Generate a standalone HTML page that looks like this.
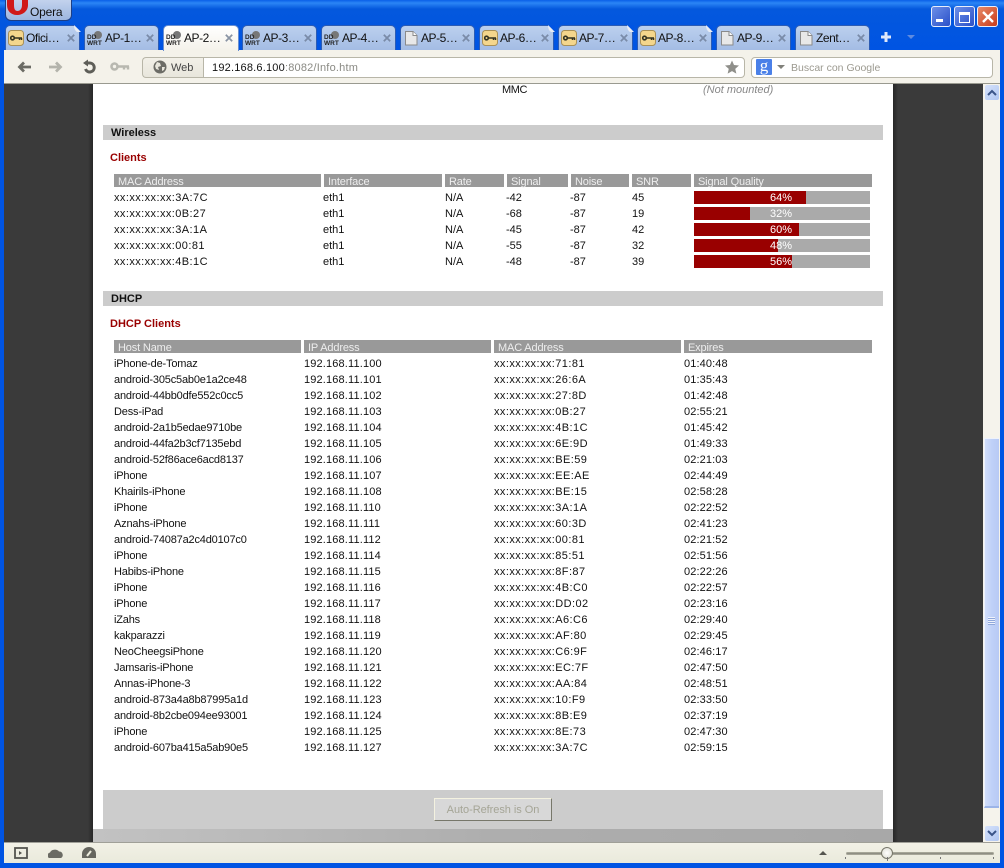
<!DOCTYPE html>
<html><head><meta charset="utf-8"><style>
html,body{margin:0;padding:0}
body{width:1004px;height:868px;position:relative;overflow:hidden;background:#0054e3;font:11px/16px "Liberation Sans",sans-serif;color:#111}
div,span,svg{position:absolute;white-space:nowrap}
.t{position:absolute}
#title{left:0;top:0;width:1004px;height:50px;background:linear-gradient(#0a5fe8 0,#2b85f5 3px,#0458dd 9px,#0054e3 100%)}
.tab{top:25px;width:75px;height:25px;background:linear-gradient(#bcd0ee,#a4bce4);border:1px solid #2c5cb4;border-bottom:0;border-radius:5px 5px 0 0;box-sizing:border-box;font-size:12px;line-height:24px;color:#111}
.tab.a{background:linear-gradient(#fff,#f4f2ea);border-color:#6a8fd0;height:26px;z-index:2;width:76px}
.tab .l{left:20px;top:0;letter-spacing:-.45px}
.tab .x{left:61px;top:8px;width:8px;height:8px}
.tab svg.i{left:2px;top:3px;width:16px;height:17px}
.tab svg.f{left:68px;top:-1px;width:7px;height:7px}
.h{height:13px;background:#999;color:#eee;line-height:14px;letter-spacing:-.15px}
.h span{left:4px;top:1px}
.sec{left:103px;width:780px;height:15px;background:#ccc;font-weight:bold;line-height:15px}
.sec span{left:8px;top:1px}
.red{color:#900;font-weight:bold;left:110px}
.r{left:0;width:1004px;height:16px}
.r span{top:1px}
.r span[style^="left:114px"]{letter-spacing:-.18px}
.r span[style^="left:304px"]{letter-spacing:.15px}
.r span[style^="left:684px"]{letter-spacing:.12px}
.r span[style^="left:494px"],.w span[style^="left:114px"]{letter-spacing:.42px !important}
.bar{left:694px;width:176px;height:13px;top:2px;background:#aaa}
.bar i{position:absolute;left:0;top:0;height:13px;background:#900}
.bar b{position:absolute;left:76px;top:0;font-weight:normal;color:#fff;line-height:15px}
</style></head><body>
<div id="title"></div>

<!-- Opera button -->
<div style="left:5px;top:-3px;width:65px;height:22px;background:linear-gradient(#c6d5ee,#9db6df);border:1px solid #1d3f85;border-radius:0 0 6px 6px;overflow:hidden">
<svg style="left:1px;top:2px" width="22" height="17"><path d="M0 0v5c0 6 4 10 10 10s11-4 11-10V0h-6v5c0 4-2 6-4.500 6S7 9 7 5V0z" fill="#d01818"/></svg>
<span style="left:24px;top:6px;font-size:12px;letter-spacing:-.2px">Opera</span></div>

<!-- window buttons -->
<div style="left:931px;top:6px;width:18px;height:19px;border:1px solid #e8eefc;border-radius:3px;background:linear-gradient(135deg,#6c8fe8,#2a50c8)"><div style="left:4px;top:12px;width:7px;height:3px;background:#fff"></div></div>
<div style="left:954px;top:6px;width:19px;height:19px;border:1px solid #e8eefc;border-radius:3px;background:linear-gradient(135deg,#6c8fe8,#2a50c8)"><div style="left:4px;top:5px;width:9px;height:7px;border:1px solid #fff;border-top-width:3px"></div></div>
<div style="left:977px;top:6px;width:19px;height:19px;border:1px solid #e8eefc;border-radius:3px;background:linear-gradient(135deg,#e88a68,#c83c1c)"><svg style="left:4px;top:4px" width="12" height="12"><path d="M1 1l10 10M11 1L1 11" stroke="#fff" stroke-width="2.400"/></svg></div>

<!-- Tabs -->
<div class="tab" style="left:5px"><svg class="i" viewBox="0 0 16 17"><rect x=".5" y="1.500" width="15" height="15" rx="3" fill="#f4d68c" stroke="#a89058"/><path d="M5 9h9M11.500 9v2M13.500 9v2" stroke="#332" stroke-width="1.500"/><circle cx="4.500" cy="9" r="1.800" fill="#f4d68c" stroke="#332" stroke-width="1.600"/></svg><span class="l">Ofici…</span><svg class="x" viewBox="0 0 10 10"><path d="M1 1l8 8M9 1l-8 8" stroke="#7a8ba8" stroke-width="2.200"/></svg><svg class="f" viewBox="0 0 7 7"><path d="M0 0H7V7z" fill="#0054e3"/><path d="M0 0L7 7H3Q0 5 0 0z" fill="#e8ecf4"/></svg></div>
<div class="tab" style="left:84px"><svg class="i" viewBox="0 0 16 17"><circle cx="11" cy="6" r="4" fill="#777"/><text x="0" y="10" font-size="6.500" font-weight="bold" fill="#222" font-family="Liberation Sans">DD</text><text x="0" y="16" font-size="6.500" font-weight="bold" fill="#222" font-family="Liberation Sans">WRT</text></svg><span class="l">AP-1…</span><svg class="x" viewBox="0 0 10 10"><path d="M1 1l8 8M9 1l-8 8" stroke="#7a8ba8" stroke-width="2.200"/></svg></div>
<div class="tab a" style="left:163px"><svg class="i" viewBox="0 0 16 17"><circle cx="11" cy="6" r="4" fill="#777"/><text x="0" y="10" font-size="6.500" font-weight="bold" fill="#222" font-family="Liberation Sans">DD</text><text x="0" y="16" font-size="6.500" font-weight="bold" fill="#222" font-family="Liberation Sans">WRT</text></svg><span class="l">AP-2…</span><svg class="x" viewBox="0 0 10 10"><path d="M1 1l8 8M9 1l-8 8" stroke="#8a94a4" stroke-width="2.200"/></svg></div>
<div class="tab" style="left:242px"><svg class="i" viewBox="0 0 16 17"><circle cx="11" cy="6" r="4" fill="#777"/><text x="0" y="10" font-size="6.500" font-weight="bold" fill="#222" font-family="Liberation Sans">DD</text><text x="0" y="16" font-size="6.500" font-weight="bold" fill="#222" font-family="Liberation Sans">WRT</text></svg><span class="l">AP-3…</span><svg class="x" viewBox="0 0 10 10"><path d="M1 1l8 8M9 1l-8 8" stroke="#7a8ba8" stroke-width="2.200"/></svg></div>
<div class="tab" style="left:321px"><svg class="i" viewBox="0 0 16 17"><circle cx="11" cy="6" r="4" fill="#777"/><text x="0" y="10" font-size="6.500" font-weight="bold" fill="#222" font-family="Liberation Sans">DD</text><text x="0" y="16" font-size="6.500" font-weight="bold" fill="#222" font-family="Liberation Sans">WRT</text></svg><span class="l">AP-4…</span><svg class="x" viewBox="0 0 10 10"><path d="M1 1l8 8M9 1l-8 8" stroke="#7a8ba8" stroke-width="2.200"/></svg></div>
<div class="tab" style="left:400px"><svg class="i" viewBox="0 0 16 17"><path d="M2.500 2.500h7.500l4 4v9.500h-11.500z" fill="#e8e8e8" stroke="#8a8a8a"/><path d="M10 2.500v4h4" fill="#fff" stroke="#8a8a8a"/></svg><span class="l">AP-5…</span><svg class="x" viewBox="0 0 10 10"><path d="M1 1l8 8M9 1l-8 8" stroke="#7a8ba8" stroke-width="2.200"/></svg></div>
<div class="tab" style="left:479px"><svg class="i" viewBox="0 0 16 17"><rect x=".5" y="1.500" width="15" height="15" rx="3" fill="#f4d68c" stroke="#a89058"/><path d="M5 9h9M11.500 9v2M13.500 9v2" stroke="#332" stroke-width="1.500"/><circle cx="4.500" cy="9" r="1.800" fill="#f4d68c" stroke="#332" stroke-width="1.600"/></svg><span class="l">AP-6…</span><svg class="x" viewBox="0 0 10 10"><path d="M1 1l8 8M9 1l-8 8" stroke="#7a8ba8" stroke-width="2.200"/></svg><svg class="f" viewBox="0 0 7 7"><path d="M0 0H7V7z" fill="#0054e3"/><path d="M0 0L7 7H3Q0 5 0 0z" fill="#e8ecf4"/></svg></div>
<div class="tab" style="left:558px"><svg class="i" viewBox="0 0 16 17"><rect x=".5" y="1.500" width="15" height="15" rx="3" fill="#f4d68c" stroke="#a89058"/><path d="M5 9h9M11.500 9v2M13.500 9v2" stroke="#332" stroke-width="1.500"/><circle cx="4.500" cy="9" r="1.800" fill="#f4d68c" stroke="#332" stroke-width="1.600"/></svg><span class="l">AP-7…</span><svg class="x" viewBox="0 0 10 10"><path d="M1 1l8 8M9 1l-8 8" stroke="#7a8ba8" stroke-width="2.200"/></svg><svg class="f" viewBox="0 0 7 7"><path d="M0 0H7V7z" fill="#0054e3"/><path d="M0 0L7 7H3Q0 5 0 0z" fill="#e8ecf4"/></svg></div>
<div class="tab" style="left:637px"><svg class="i" viewBox="0 0 16 17"><rect x=".5" y="1.500" width="15" height="15" rx="3" fill="#f4d68c" stroke="#a89058"/><path d="M5 9h9M11.500 9v2M13.500 9v2" stroke="#332" stroke-width="1.500"/><circle cx="4.500" cy="9" r="1.800" fill="#f4d68c" stroke="#332" stroke-width="1.600"/></svg><span class="l">AP-8…</span><svg class="x" viewBox="0 0 10 10"><path d="M1 1l8 8M9 1l-8 8" stroke="#7a8ba8" stroke-width="2.200"/></svg><svg class="f" viewBox="0 0 7 7"><path d="M0 0H7V7z" fill="#0054e3"/><path d="M0 0L7 7H3Q0 5 0 0z" fill="#e8ecf4"/></svg></div>
<div class="tab" style="left:716px"><svg class="i" viewBox="0 0 16 17"><path d="M2.500 2.500h7.500l4 4v9.500h-11.500z" fill="#e8e8e8" stroke="#8a8a8a"/><path d="M10 2.500v4h4" fill="#fff" stroke="#8a8a8a"/></svg><span class="l">AP-9…</span><svg class="x" viewBox="0 0 10 10"><path d="M1 1l8 8M9 1l-8 8" stroke="#7a8ba8" stroke-width="2.200"/></svg></div>
<div class="tab" style="left:795px"><svg class="i" viewBox="0 0 16 17"><path d="M2.500 2.500h7.500l4 4v9.500h-11.500z" fill="#e8e8e8" stroke="#8a8a8a"/><path d="M10 2.500v4h4" fill="#fff" stroke="#8a8a8a"/></svg><span class="l">Zent…</span><svg class="x" viewBox="0 0 10 10"><path d="M1 1l8 8M9 1l-8 8" stroke="#7a8ba8" stroke-width="2.200"/></svg></div>
<svg style="left:880px;top:31px" width="12" height="12"><path d="M6 1v10M1 6h10" stroke="#dfe8fa" stroke-width="3"/></svg>
<svg style="left:907px;top:35px" width="9" height="5"><path d="M0 0h8L4 4z" fill="#5f8be0"/></svg>

<!-- Toolbar -->
<div style="left:4px;top:50px;width:996px;height:33px;background:#f4f2ea;border-bottom:1px solid #9a9a90;box-sizing:content-box"></div>
<svg style="left:17px;top:60px" width="16" height="14"><path d="M7 2.500L2.500 7 7 11.500M3 7h11" fill="none" stroke="#6b6b64" stroke-width="2.800"/></svg>
<svg style="left:48px;top:60px" width="16" height="14"><path d="M8 2.500L12.500 7 8 11.500M12 7H1" fill="none" stroke="#b4b4ac" stroke-width="2.800"/></svg>
<svg style="left:81px;top:59px" width="16" height="15"><path d="M4 4h5a4.500 4.500 0 1 1-4.500 6" fill="none" stroke="#5e5e58" stroke-width="3"/><path d="M7 .5v7L2 4z" fill="#5e5e58"/></svg>
<svg style="left:110px;top:61px" width="20" height="11"><circle cx="4.500" cy="5.500" r="3" fill="none" stroke="#b8b8b0" stroke-width="2.600"/><path d="M7 5.500h12M14 5.500v3M18 5.500v3" stroke="#b8b8b0" stroke-width="2.400"/></svg>
<div style="left:142px;top:57px;width:60px;height:19px;border:1px solid #b8b6a8;border-right:0;border-radius:4px 0 0 4px;background:linear-gradient(#f2f0e8,#e8e6dc)"></div>
<svg style="left:153px;top:60px" width="14" height="14"><circle cx="7" cy="7" r="6.500" fill="#6c6c66"/><path d="M4 2l3 1 1 3-3 1 1 3-3-1-1-3zM9 7l3 0-1 3-2 1z" fill="#e8e6dc"/></svg>
<span style="left:171px;top:60px;font-size:11px;color:#444">Web</span>
<div style="left:203px;top:57px;width:540px;height:19px;border:1px solid #b8b6a8;border-radius:0 4px 4px 0;background:#fff"></div>
<span style="left:212px;top:60px;font-size:11px;letter-spacing:.2px"><span style="position:static;color:#111">192.168.6.100</span><span style="position:static;color:#8a8a84">:8082/Info.htm</span></span>
<svg style="left:725px;top:60px" width="14" height="14" viewBox="0 0 16 15"><path d="M8 0l2.300 5.200 5.700.6-4.300 3.800 1.300 5.400L8 12.200 3 15l1.300-5.400L0 5.800l5.700-.6z" fill="#8f8f8a"/></svg>
<div style="left:751px;top:57px;width:240px;height:19px;border:1px solid #b8b6a8;border-radius:4px;background:#fff"></div>
<div style="left:756px;top:59px;width:16px;height:16px;background:#4a80e8;border-radius:1px;color:#fff;font:normal 17px/14px 'Liberation Serif',serif;text-align:center">g</div>
<svg style="left:777px;top:65px" width="9" height="5"><path d="M0 0h8L4 4z" fill="#80807a"/></svg>
<span style="left:791px;top:60px;font-size:10.500px;color:#9c9a90">Buscar con Google</span>

<!-- Side dark panels -->
<div style="left:4px;top:84px;width:89px;height:758px;background:#3a3a3a"></div>
<div style="left:88px;top:84px;width:5px;height:758px;background:linear-gradient(90deg,#3a3a3a,#272727)"></div>
<div style="left:893px;top:84px;width:90px;height:758px;background:#3a3a3a"></div>
<div style="left:893px;top:84px;width:5px;height:758px;background:linear-gradient(90deg,#272727,#3a3a3a)"></div>
<div style="left:93px;top:84px;width:800px;height:745px;background:#fff"></div>

<!-- Scrollbar -->
<div style="left:983px;top:84px;width:17px;height:758px;background:#f5f3ec"></div>
<div style="left:985px;top:85px;width:14px;height:15px;background:linear-gradient(135deg,#d6e2fb,#b0c6f2);border-radius:2px"><svg style="left:2px;top:4px" width="10" height="7"><path d="M1 6l4-4 4 4" fill="none" stroke="#3a5488" stroke-width="2"/></svg></div>
<div style="left:984px;top:438px;width:15px;height:370px;background:linear-gradient(90deg,#d2defa,#bfd0f8 50%,#b8caf4);border:1px solid #eef2fc;border-width:1px 0 1px 1px;box-sizing:border-box;border-bottom:2px solid #9cb4e8"></div>
<svg style="left:987px;top:617px" width="9" height="9"><path d="M1 .5h7M1 2.500h7M1 4.500h7M1 6.500h7" stroke="#eef2fc"/><path d="M1 1.500h7M1 3.500h7M1 5.500h7M1 7.500h7" stroke="#90a8dc"/></svg>
<div style="left:985px;top:826px;width:14px;height:15px;background:linear-gradient(135deg,#d6e2fb,#b0c6f2);border-radius:2px"><svg style="left:2px;top:4px" width="10" height="7"><path d="M1 1l4 4 4-4" fill="none" stroke="#3a5488" stroke-width="2"/></svg></div>

<!-- Content -->
<span class="t" style="left:502px;top:82px;letter-spacing:-.4px">MMC</span>
<span class="t" style="left:703px;top:82px;color:#888;font-style:italic">(Not mounted)</span>

<div class="sec" style="top:125px"><span>Wireless</span></div>
<span class="t red" style="top:150px">Clients</span>
<div class="h" style="left:114px;top:174px;width:207px"><span>MAC Address</span></div>
<div class="h" style="left:324px;top:174px;width:118px"><span>Interface</span></div>
<div class="h" style="left:445px;top:174px;width:59px"><span>Rate</span></div>
<div class="h" style="left:507px;top:174px;width:61px"><span>Signal</span></div>
<div class="h" style="left:571px;top:174px;width:58px"><span>Noise</span></div>
<div class="h" style="left:632px;top:174px;width:59px"><span>SNR</span></div>
<div class="h" style="left:694px;top:174px;width:178px"><span>Signal Quality</span></div>

<div class="r w" style="top:189px"><span style="left:114px">xx:xx:xx:xx:3A:7C</span><span style="left:323px">eth1</span><span style="left:445px">N/A</span><span style="left:506px">-42</span><span style="left:570px">-87</span><span style="left:632px">45</span><div class="bar"><i style="width:112px"></i><b>64%</b></div></div>
<div class="r w" style="top:205px"><span style="left:114px">xx:xx:xx:xx:0B:27</span><span style="left:323px">eth1</span><span style="left:445px">N/A</span><span style="left:506px">-68</span><span style="left:570px">-87</span><span style="left:632px">19</span><div class="bar"><i style="width:56px"></i><b>32%</b></div></div>
<div class="r w" style="top:221px"><span style="left:114px">xx:xx:xx:xx:3A:1A</span><span style="left:323px">eth1</span><span style="left:445px">N/A</span><span style="left:506px">-45</span><span style="left:570px">-87</span><span style="left:632px">42</span><div class="bar"><i style="width:105px"></i><b>60%</b></div></div>
<div class="r w" style="top:237px"><span style="left:114px">xx:xx:xx:xx:00:81</span><span style="left:323px">eth1</span><span style="left:445px">N/A</span><span style="left:506px">-55</span><span style="left:570px">-87</span><span style="left:632px">32</span><div class="bar"><i style="width:84px"></i><b>48%</b></div></div>
<div class="r w" style="top:253px"><span style="left:114px">xx:xx:xx:xx:4B:1C</span><span style="left:323px">eth1</span><span style="left:445px">N/A</span><span style="left:506px">-48</span><span style="left:570px">-87</span><span style="left:632px">39</span><div class="bar"><i style="width:98px"></i><b>56%</b></div></div>

<div class="sec" style="top:291px"><span>DHCP</span></div>
<span class="t red" style="top:316px">DHCP Clients</span>
<div class="h" style="left:114px;top:340px;width:187px"><span>Host Name</span></div>
<div class="h" style="left:304px;top:340px;width:187px"><span>IP Address</span></div>
<div class="h" style="left:494px;top:340px;width:187px"><span>MAC Address</span></div>
<div class="h" style="left:684px;top:340px;width:188px"><span>Expires</span></div>

<div class="r" style="top:355px"><span style="left:114px">iPhone-de-Tomaz</span><span style="left:304px">192.168.11.100</span><span style="left:494px">xx:xx:xx:xx:71:81</span><span style="left:684px">01:40:48</span></div>
<div class="r" style="top:371px"><span style="left:114px">android-305c5ab0e1a2ce48</span><span style="left:304px">192.168.11.101</span><span style="left:494px">xx:xx:xx:xx:26:6A</span><span style="left:684px">01:35:43</span></div>
<div class="r" style="top:387px"><span style="left:114px">android-44bb0dfe552c0cc5</span><span style="left:304px">192.168.11.102</span><span style="left:494px">xx:xx:xx:xx:27:8D</span><span style="left:684px">01:42:48</span></div>
<div class="r" style="top:403px"><span style="left:114px">Dess-iPad</span><span style="left:304px">192.168.11.103</span><span style="left:494px">xx:xx:xx:xx:0B:27</span><span style="left:684px">02:55:21</span></div>
<div class="r" style="top:419px"><span style="left:114px">android-2a1b5edae9710be</span><span style="left:304px">192.168.11.104</span><span style="left:494px">xx:xx:xx:xx:4B:1C</span><span style="left:684px">01:45:42</span></div>
<div class="r" style="top:435px"><span style="left:114px">android-44fa2b3cf7135ebd</span><span style="left:304px">192.168.11.105</span><span style="left:494px">xx:xx:xx:xx:6E:9D</span><span style="left:684px">01:49:33</span></div>
<div class="r" style="top:451px"><span style="left:114px">android-52f86ace6acd8137</span><span style="left:304px">192.168.11.106</span><span style="left:494px">xx:xx:xx:xx:BE:59</span><span style="left:684px">02:21:03</span></div>
<div class="r" style="top:467px"><span style="left:114px">iPhone</span><span style="left:304px">192.168.11.107</span><span style="left:494px">xx:xx:xx:xx:EE:AE</span><span style="left:684px">02:44:49</span></div>
<div class="r" style="top:483px"><span style="left:114px">Khairils-iPhone</span><span style="left:304px">192.168.11.108</span><span style="left:494px">xx:xx:xx:xx:BE:15</span><span style="left:684px">02:58:28</span></div>
<div class="r" style="top:499px"><span style="left:114px">iPhone</span><span style="left:304px">192.168.11.110</span><span style="left:494px">xx:xx:xx:xx:3A:1A</span><span style="left:684px">02:22:52</span></div>
<div class="r" style="top:515px"><span style="left:114px">Aznahs-iPhone</span><span style="left:304px">192.168.11.111</span><span style="left:494px">xx:xx:xx:xx:60:3D</span><span style="left:684px">02:41:23</span></div>
<div class="r" style="top:531px"><span style="left:114px">android-74087a2c4d0107c0</span><span style="left:304px">192.168.11.112</span><span style="left:494px">xx:xx:xx:xx:00:81</span><span style="left:684px">02:21:52</span></div>
<div class="r" style="top:547px"><span style="left:114px">iPhone</span><span style="left:304px">192.168.11.114</span><span style="left:494px">xx:xx:xx:xx:85:51</span><span style="left:684px">02:51:56</span></div>
<div class="r" style="top:563px"><span style="left:114px">Habibs-iPhone</span><span style="left:304px">192.168.11.115</span><span style="left:494px">xx:xx:xx:xx:8F:87</span><span style="left:684px">02:22:26</span></div>
<div class="r" style="top:579px"><span style="left:114px">iPhone</span><span style="left:304px">192.168.11.116</span><span style="left:494px">xx:xx:xx:xx:4B:C0</span><span style="left:684px">02:22:57</span></div>
<div class="r" style="top:595px"><span style="left:114px">iPhone</span><span style="left:304px">192.168.11.117</span><span style="left:494px">xx:xx:xx:xx:DD:02</span><span style="left:684px">02:23:16</span></div>
<div class="r" style="top:611px"><span style="left:114px">iZahs</span><span style="left:304px">192.168.11.118</span><span style="left:494px">xx:xx:xx:xx:A6:C6</span><span style="left:684px">02:29:40</span></div>
<div class="r" style="top:627px"><span style="left:114px">kakparazzi</span><span style="left:304px">192.168.11.119</span><span style="left:494px">xx:xx:xx:xx:AF:80</span><span style="left:684px">02:29:45</span></div>
<div class="r" style="top:643px"><span style="left:114px">NeoCheegsiPhone</span><span style="left:304px">192.168.11.120</span><span style="left:494px">xx:xx:xx:xx:C6:9F</span><span style="left:684px">02:46:17</span></div>
<div class="r" style="top:659px"><span style="left:114px">Jamsaris-iPhone</span><span style="left:304px">192.168.11.121</span><span style="left:494px">xx:xx:xx:xx:EC:7F</span><span style="left:684px">02:47:50</span></div>
<div class="r" style="top:675px"><span style="left:114px">Annas-iPhone-3</span><span style="left:304px">192.168.11.122</span><span style="left:494px">xx:xx:xx:xx:AA:84</span><span style="left:684px">02:48:51</span></div>
<div class="r" style="top:691px"><span style="left:114px">android-873a4a8b87995a1d</span><span style="left:304px">192.168.11.123</span><span style="left:494px">xx:xx:xx:xx:10:F9</span><span style="left:684px">02:33:50</span></div>
<div class="r" style="top:707px"><span style="left:114px">android-8b2cbe094ee93001</span><span style="left:304px">192.168.11.124</span><span style="left:494px">xx:xx:xx:xx:8B:E9</span><span style="left:684px">02:37:19</span></div>
<div class="r" style="top:723px"><span style="left:114px">iPhone</span><span style="left:304px">192.168.11.125</span><span style="left:494px">xx:xx:xx:xx:8E:73</span><span style="left:684px">02:47:30</span></div>
<div class="r" style="top:739px"><span style="left:114px">android-607ba415a5ab90e5</span><span style="left:304px">192.168.11.127</span><span style="left:494px">xx:xx:xx:xx:3A:7C</span><span style="left:684px">02:59:15</span></div>

<div style="left:103px;top:790px;width:780px;height:39px;background:#ccc"></div>
<div style="left:434px;top:798px;width:118px;height:23px;box-sizing:border-box;background:#d8d8d8;border:1px solid;border-color:#f4f2e0 #77776a #77776a #f4f2e0;color:#a5a596;text-align:center;line-height:23px;letter-spacing:-.05px">Auto-Refresh is On</div>
<div style="left:93px;top:829px;width:800px;height:13px;background:linear-gradient(90deg,#c2c2c2,#aeaeae 50%,#a8a8a8)"></div>

<!-- Status bar -->
<div style="left:4px;top:842px;width:996px;height:21px;background:linear-gradient(#f2f1e6,#eaeadc);border-top:1px solid #a0a098;box-sizing:border-box"></div>
<svg style="left:14px;top:847px" width="14" height="13"><rect x="1" y="1" width="12" height="10" fill="none" stroke="#55554f" stroke-width="1.800"/><path d="M5 4l3 2-3 2z" fill="#55554f"/></svg>
<svg style="left:48px;top:848px" width="15" height="11"><path d="M1 10a3 3 0 0 1 1-5.500 5 4 0 0 1 9-1 3.500 3.500 0 0 1 2 6.500z" fill="#6b6b64"/></svg>
<svg style="left:82px;top:847px" width="14" height="12"><path d="M0 11V7a7 7 0 0 1 14 0v4z" fill="#66665f"/><path d="M5 9l4-5" stroke="#eeeedf" stroke-width="2"/></svg>
<svg style="left:819px;top:850px" width="9" height="5"><path d="M0 5h8L4 1z" fill="#55554f"/></svg>
<div style="left:846px;top:852px;width:146px;height:1px;background:#8e8e84;border:1px solid #a6a698;border-radius:3px"></div>
<div style="left:881px;top:847px;width:10px;height:10px;border:1px solid #77776a;border-radius:50%;background:radial-gradient(#fff,#dcdcd0)"></div>
<svg style="left:845px;top:856px" width="150" height="5"><path d="M.5 1v2M42.500 1v4M95.500 1v2M148.500 1v2" stroke="#777"/></svg>
</body></html>
